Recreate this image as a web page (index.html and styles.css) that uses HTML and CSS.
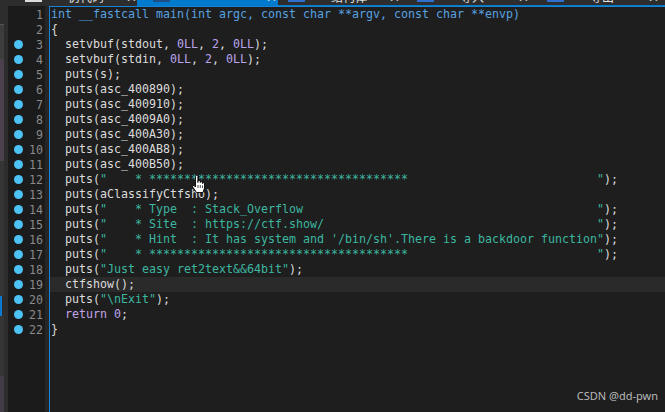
FILE: index.html
```html
<!DOCTYPE html>
<html>
<head>
<meta charset="utf-8">
<link rel="stylesheet" href="styles.css">
</head>
<body>
<div class="tabs">
  <div class="tab t1"><div class="ti"><span class="ticon white"></span><span class="tlabel">伪代码</span><span class="tclose">✕</span></div></div>
  <div class="tab t2 active"><div class="ti"><span class="ticon dark"></span><span class="tlabel"></span><span class="tclose">✕</span></div></div>
  <div class="tab t3 line"><div class="ti"><span class="ticon blue"></span><span class="tlabel">结构体</span><span class="tclose">✕</span></div></div>
  <div class="tab t4 line"><div class="ti"><span class="ticon blue"></span><span class="tlabel">导入</span><span class="tclose">✕</span></div></div>
  <div class="tab t5 line"><div class="ti"><span class="ticon blue"></span><span class="tlabel">导出</span><span class="tclose">✕</span></div></div>
</div>
<div class="main">
  <div class="side">
    <div class="seg s-top"></div>
    <div class="seg s-grey"></div>
    <div class="seg s-purple"></div>
    <div class="seg s-mid"></div>
    <div class="seg s-blue"></div>
    <div class="seg s-mid2"></div>
    <div class="seg s-purple2"></div>
  </div>
  <div class="gutter">
    <div class="gl"><span class="dot off"></span><span class="ln">1</span></div>
    <div class="gl"><span class="dot off"></span><span class="ln">2</span></div>
    <div class="gl"><span class="dot"></span><span class="ln">3</span></div>
    <div class="gl"><span class="dot"></span><span class="ln">4</span></div>
    <div class="gl"><span class="dot"></span><span class="ln">5</span></div>
    <div class="gl"><span class="dot"></span><span class="ln">6</span></div>
    <div class="gl"><span class="dot"></span><span class="ln">7</span></div>
    <div class="gl"><span class="dot"></span><span class="ln">8</span></div>
    <div class="gl"><span class="dot"></span><span class="ln">9</span></div>
    <div class="gl"><span class="dot"></span><span class="ln">10</span></div>
    <div class="gl"><span class="dot"></span><span class="ln">11</span></div>
    <div class="gl"><span class="dot"></span><span class="ln">12</span></div>
    <div class="gl"><span class="dot"></span><span class="ln">13</span></div>
    <div class="gl"><span class="dot"></span><span class="ln">14</span></div>
    <div class="gl"><span class="dot"></span><span class="ln">15</span></div>
    <div class="gl"><span class="dot"></span><span class="ln">16</span></div>
    <div class="gl"><span class="dot"></span><span class="ln">17</span></div>
    <div class="gl"><span class="dot"></span><span class="ln">18</span></div>
    <div class="gl"><span class="dot"></span><span class="ln">19</span></div>
    <div class="gl"><span class="dot"></span><span class="ln">20</span></div>
    <div class="gl"><span class="dot"></span><span class="ln">21</span></div>
    <div class="gl"><span class="dot"></span><span class="ln">22</span></div>
  </div>
  <div class="gutter-edge"></div>
  <div class="code">
<div class="cl hdr">int __fastcall main(int argc, const char **argv, const char **envp)</div>
<div class="cl">{</div>
<div class="cl">  setvbuf(stdout, <span class="n">0LL</span>, <span class="n">2</span>, <span class="n">0LL</span>);</div>
<div class="cl">  setvbuf(stdin, <span class="n">0LL</span>, <span class="n">2</span>, <span class="n">0LL</span>);</div>
<div class="cl">  puts(s);</div>
<div class="cl">  puts(asc_400890);</div>
<div class="cl">  puts(asc_400910);</div>
<div class="cl">  puts(asc_4009A0);</div>
<div class="cl">  puts(asc_400A30);</div>
<div class="cl">  puts(asc_400AB8);</div>
<div class="cl">  puts(asc_400B50);</div>
<div class="cl">  puts(<span class="s">"<span class="pad">    * *************************************</span>"</span>);</div>
<div class="cl">  puts(aClassifyCtfsho);</div>
<div class="cl">  puts(<span class="s">"<span class="pad">    * Type  : Stack_Overflow</span>"</span>);</div>
<div class="cl">  puts(<span class="s">"<span class="pad">    * Site  : https://ctf.show/</span>"</span>);</div>
<div class="cl">  puts(<span class="s">"<span class="pad">    * Hint  : It has system and '/bin/sh'.There is a backdoor function</span>"</span>);</div>
<div class="cl">  puts(<span class="s">"<span class="pad">    * *************************************</span>"</span>);</div>
<div class="cl">  puts(<span class="s">"Just easy ret2text&amp;&amp;64bit"</span>);</div>
<div class="cl cur">  ctfshow();</div>
<div class="cl">  puts(<span class="s">"\nExit"</span>);</div>
<div class="cl">  <span class="k">return</span> <span class="n">0</span>;</div>
<div class="cl">}</div>
  </div>
</div>
<svg class="cursor" width="14" height="20" viewBox="0 0 14 20">
  <path d="M4.5 1.5 a1.2 1.2 0 0 1 2.4 0 v6 v-1 a1.2 1.2 0 0 1 2.4 0 v1 a1.2 1.2 0 0 1 2.2 0 v1 a1.1 1.1 0 0 1 2 0 v4.5 l-1.5 4.5 h-6.5 l-3.8 -5.5 a1.1 1.1 0 0 1 1.8 -1.2 l1 1.2 z" fill="#ffffff" stroke="#000000" stroke-width="0.9" stroke-linejoin="round"/>
  <path d="M7 10 v3 M9.3 10 v3 M11.5 10.5 v2.5" stroke="#000" stroke-width="0.7"/>
</svg>
<div class="wm">CSDN @dd-pwn</div>
</body>
</html>
```
FILE: styles.css
```css
html, body {
  margin: 0;
  padding: 0;
  background: #1e1e1e;
  width: 665px;
  height: 412px;
  overflow: hidden;
}
body {
  font-family: "DejaVu Sans Mono", "Liberation Mono", monospace;
  position: relative;
}
.tabs {
  display: flex;
  height: 6px;
  background: #2d2d2d;
  overflow: hidden;
}
.tab {
  height: 6px;
  overflow: hidden;
  box-sizing: border-box;
  flex: none;
}
.tab.line { border-bottom: 1px solid #007acc; }
.t1 { width: 137px; padding-left: 25px; }
.t2 { width: 141px; padding-left: 16px; }
.t3 { width: 129px; padding-left: 10px; }
.t4 { width: 130px; padding-left: 10px; }
.t5 { width: 128px; padding-left: 10px; }
.tab.active { background: #007acc; }
.ti {
  display: flex;
  align-items: center;
  height: 16px;
  margin-top: -12px;
  font-family: "Noto Sans CJK SC", sans-serif;
  font-size: 12px;
  color: #e0e0e0;
}
.ticon {
  width: 17px;
  height: 12px;
  box-sizing: border-box;
  flex: none;
}
.ticon.white { border: 2px solid #dcdcdc; }
.ticon.dark { background: #1d4f86; }
.ticon.blue { background: #2f6fd0; }
.tlabel {
  margin-left: 26px;
  width: 44px;
  flex: none;
  white-space: nowrap;
  overflow: hidden;
}
.tclose {
  margin-left: 14px;
  font-size: 13px;
  color: #e8e8e8;
  flex: none;
}
.t2 .tlabel { width: 52px; margin-left: 26px; }
.t2 .tclose { margin-left: 18px; }

.main {
  display: flex;
  height: 406px;
}
.side {
  width: 8px;
  display: flex;
  flex-direction: column;
  background: #2d2d2d;
  flex: none;
}
.seg { width: 4px; flex: none; }
.s-top { height: 18px; background: #2d2d2d; }
.s-grey { height: 34px; background: #3d3d3d; border-top: 1px solid #555; }
.s-purple { height: 102px; background: #4a414d; }
.s-mid { height: 135px; background: #353535; }
.s-blue { height: 20px; width: 2px; background: #0a7ad0; }
.s-mid2 { height: 60px; background: #353535; }
.s-purple2 { flex: 1; background: #443d47; }

.gutter {
  width: 37px;
  flex: none;
  background: #1b1b1b;
  padding-top: 1px;
}
.gutter-edge {
  width: 4px;
  flex: none;
  background: #262626;
}
.gl {
  height: 15px;
  display: flex;
  align-items: center;
  position: relative;
}
.dot {
  width: 9px;
  height: 9px;
  border-radius: 50%;
  background: #4cc2f5;
  margin-left: 6px;
  flex: none;
}
.dot.off { background: transparent; }
.ln {
  flex: 1;
  text-align: right;
  padding-right: 2px;
  color: #8a8a8a;
  font-size: 11.6px;
}
.code {
  flex: 1;
  border-top: 1px solid #1883d4;
  border-left: 1px solid #1883d4;
  padding-left: 1px;
  font-size: 11.63px;
  color: #dcdcdc;
}
.cl {
  height: 15px;
  line-height: 15px;
  white-space: pre;
}
.cl.cur {
  background: #2a2a2a;
  margin-left: -1px;
  padding-left: 1px;
}
.hdr { color: #58a2e0; }
.n { color: #b9a3ec; }
.k { color: #c3a5e6; }
.s { color: #3db6a0; }
.pad {
  display: inline-block;
  width: 70ch;
  white-space: pre;
}
.cursor {
  position: absolute;
  left: 191px;
  top: 175px;
}
.wm {
  position: absolute;
  right: 7px;
  top: 388px;
  font-family: "Noto Sans", "Noto Sans CJK SC", sans-serif;
  font-size: 11px;
  color: #b8b8b8;
}
```
